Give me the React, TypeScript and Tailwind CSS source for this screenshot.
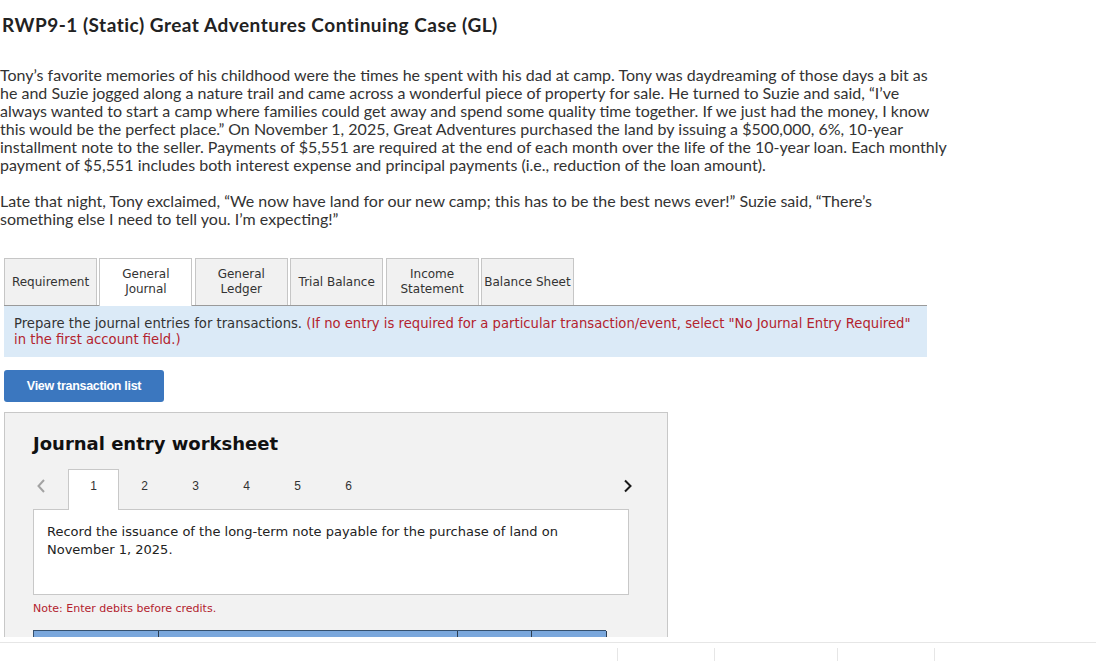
import React from 'react';

const tabs = [
  { label: ['Requirement'], active: false },
  { label: ['General', 'Journal'], active: true },
  { label: ['General', 'Ledger'], active: false },
  { label: ['Trial Balance'], active: false },
  { label: ['Income', 'Statement'], active: false },
  { label: ['Balance Sheet'], active: false },
];

const verdana = "font-['Verdana','DejaVu_Sans',sans-serif]";

function ChevronLeft() {
  return (
    <svg width="10" height="16" viewBox="0 0 10 16" fill="none">
      <path d="M8 2 L2.5 8 L8 14" stroke="#a3a3a3" strokeWidth="2" />
    </svg>
  );
}

function ChevronRight() {
  return (
    <svg width="10" height="14" viewBox="0 0 10 14" fill="none">
      <path d="M2 1.5 L7.5 7 L2 12.5" stroke="#1a1a1a" strokeWidth="2" />
    </svg>
  );
}

export default function App() {
  return (
    <div className="w-[1096px] h-[661px] bg-white overflow-hidden flex flex-col">
      <div className="h-[637px] overflow-hidden">
        {/* Title */}
        <h1 className="pt-[13px] pl-[2px] text-[19px] leading-[24px] font-bold tracking-[0.5px] text-[#222] font-['Lato',sans-serif]">
          RWP9-1 (Static) Great Adventures Continuing Case (GL)
        </h1>

        {/* Case text */}
        <div className="mt-[29px] text-[16px] leading-[18px] text-[#333] font-['Lato',sans-serif]">
          <p>
            Tony’s favorite memories of his childhood were the times he spent with his dad at camp. Tony was daydreaming of those days a bit as<br />
            he and Suzie jogged along a nature trail and came across a wonderful piece of property for sale. He turned to Suzie and said, “I’ve<br />
            always wanted to start a camp where families could get away and spend some quality time together. If we just had the money, I know<br />
            this would be the perfect place.” On November 1, 2025, Great Adventures purchased the land by issuing a $500,000, 6%, 10-year<br />
            installment note to the seller. Payments of $5,551 are required at the end of each month over the life of the 10-year loan. Each monthly<br />
            payment of $5,551 includes both interest expense and principal payments (i.e., reduction of the loan amount).
          </p>
          <p className="mt-[18px]">
            Late that night, Tony exclaimed, “We now have land for our new camp; this has to be the best news ever!” Suzie said, “There’s<br />
            something else I need to tell you. I’m expecting!”
          </p>
        </div>

        {/* Tabs */}
        <div className={`mt-[30px] ml-[4px] w-[923px] flex items-end gap-[2.4px] border-b border-[#9a9a9a] ${verdana}`}>
          {tabs.map((t) => (
            <div
              key={t.label.join(' ')}
              className={`w-[93px] flex flex-col items-center justify-center text-[12px] leading-[15px] text-[#333] border-t border-l border-r border-[#c6c6c6] ${
                t.active ? 'bg-white h-[48px] pb-[1px] -mb-px' : 'bg-[#f1f1f1] h-[47px]'
              }`}
            >
              {t.label.map((l) => (
                <span key={l}>{l}</span>
              ))}
            </div>
          ))}
        </div>
        <div className={`ml-[4px] w-[923px] h-[51px] bg-[#dbeaf7] pt-[10px] pl-[10px] text-[13.2px] leading-[16px] text-[#333] whitespace-nowrap ${verdana}`}>
          Prepare the journal entries for transactions.{' '}
          <span className="text-[#b3232e]">
            (If no entry is required for a particular transaction/event, select "No Journal Entry Required"<br />
            in the first account field.)
          </span>
        </div>

        {/* Button */}
        <button className="mt-[13px] ml-[4px] w-[160px] h-[32px] rounded-[3px] bg-[#3b77bf] text-white text-[12.5px] font-bold tracking-[-0.3px] font-['Liberation_Sans',Arial,sans-serif]">
          View transaction list
        </button>

        {/* Worksheet */}
        <div className={`mt-[10px] ml-[4px] w-[664px] border border-[#c8c8c8] bg-[#f2f2f2] pl-[28px] pt-[19px] pb-[40px] ${verdana}`}>
          <h2 className="text-[18px] leading-[24px] font-bold text-[#111]">Journal entry worksheet</h2>

          <div className="mt-[13px] w-[600px] h-[40px] flex items-start font-['Liberation_Sans',Arial,sans-serif] text-[12px] leading-[14px] text-[#333]">
            <div className="w-[35px] flex pl-[3px] mt-[9px]">
              <ChevronLeft />
            </div>
            {[1, 2, 3, 4, 5, 6].map((n) =>
              n === 1 ? (
                <div
                  key={n}
                  className="relative z-10 w-[51px] h-[41px] bg-white border-t border-l border-r border-[#c8c8c8] pt-[9px] text-center"
                >
                  {n}
                </div>
              ) : (
                <div key={n} className="w-[51px] mt-[10px] text-center">
                  {n}
                </div>
              )
            )}
            <div className="ml-auto mt-[10px]">
              <ChevronRight />
            </div>
          </div>

          <div className="w-[596px] h-[86px] bg-white border border-[#c8c8c8] pt-[13px] pl-[13px] text-[13px] leading-[18px] text-[#222]">
            Record the issuance of the long-term note payable for the purchase of land on<br />
            November 1, 2025.
          </div>

          <p className="mt-[7px] text-[11px] leading-[14px] text-[#b3232e]">Note: Enter debits before credits.</p>

          <div className="mt-[14px] w-[573px] h-[30px] grid grid-cols-[125px_299px_74px_75px] bg-[#7aa7dc] border-t border-l border-[#34506f]">
            <div className="border-r border-[#2c3e52]" />
            <div className="border-r border-[#2c3e52]" />
            <div className="border-r border-[#2c3e52]" />
            <div className="border-r border-[#2c3e52]" />
          </div>
        </div>
      </div>

      {/* Bottom strip */}
      <div className="mt-[5px] flex-1 border-t border-[#e6e6e6] pt-[5px] grid grid-cols-[617px_97px_123px_97px_1fr]">
        <div />
        <div className="border-l border-[#e6e6e6]" />
        <div className="border-l border-[#e6e6e6]" />
        <div className="border-l border-[#e6e6e6]" />
        <div className="border-l border-[#e6e6e6]" />
      </div>
    </div>
  );
}
